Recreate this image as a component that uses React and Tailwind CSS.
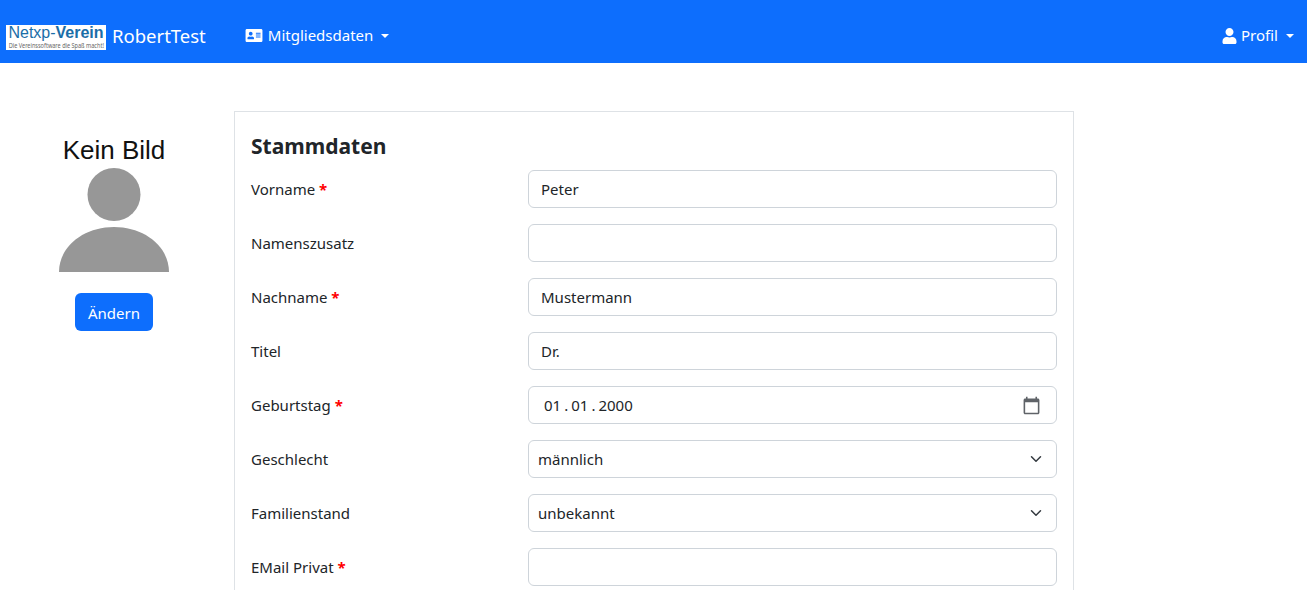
import React from 'react';
import { FaAddressCard, FaUser } from 'react-icons/fa';

const inputClass = 'w-full h-[38px] px-3 bg-white border border-[#ced4da] rounded-[6px] text-[#212529] outline-none';

function Caret() {
  return <span className="ml-2 w-0 h-0 border-x-[4.5px] border-x-transparent border-t-[4.5px] border-t-white"></span>;
}

function Row({ label, required, children }) {
  return (
    <div className="grid grid-cols-[277px_1fr] items-center mb-4">
      <label>
        {label}
        {required && <span className="text-[#ff0000] font-bold"> *</span>}
      </label>
      {children}
    </div>
  );
}

function SelectField({ value }) {
  return (
    <div className="relative">
      <select defaultValue={value} className={`${inputClass} appearance-none pl-[9px]`}>
        <option>{value}</option>
      </select>
      <svg viewBox="0 0 16 16" className="absolute right-[15px] top-[13px] w-3 h-3 pointer-events-none" fill="none">
        <path d="m2 5 6 6 6-6" stroke="#343a40" strokeWidth="2" strokeLinecap="round" strokeLinejoin="round" />
      </svg>
    </div>
  );
}

export default function App() {
  return (
    <div className="h-screen overflow-hidden bg-white text-[#212529] text-[15px] font-['Noto_Sans','Open_Sans',sans-serif]">
      <nav className="h-[63px] bg-[#0d6efd] flex items-center pt-2 pl-[6px] pr-[13px] text-white">
        <div className="w-[100px] h-[25px] mt-1 bg-white flex flex-col items-center">
          <div className="text-[16px] leading-[15px] font-['Liberation_Sans',sans-serif] text-[#1a6ea8] whitespace-nowrap">
            Netxp-<span className="font-bold">Verein</span>
          </div>
          <div className="text-[7.5px] leading-[10px] text-[#666] whitespace-nowrap scale-x-[0.74]">Die Vereinssoftware die Spaß macht!</div>
        </div>
        <span className="ml-[6px] text-[18.5px]">RobertTest</span>
        <div className="ml-[39px] flex items-center">
          <FaAddressCard className="w-[18px] h-[15px] mr-[5px]" />
          <span>Mitgliedsdaten</span>
          <Caret />
        </div>
        <div className="ml-auto flex items-center">
          <FaUser className="w-[15px] h-[16px] mr-[4px]" />
          <span>Profil</span>
          <Caret />
        </div>
      </nav>

      <main className="flex pt-12">
        <aside className="w-[228px] flex flex-col items-center pt-[24px]">
          <div className="text-[26px] leading-[30px] text-[#111] font-['Liberation_Sans',sans-serif]">Kein Bild</div>
          <svg viewBox="0 0 110 105" className="w-[110px] h-[105px] mt-[2px]" fill="#979797">
            <circle cx="55" cy="27.5" r="26.5" />
            <path d="M0 105C0 80 24 60 55 60s55 20 55 45z" />
          </svg>
          <button className="mt-[21px] h-[38px] w-[78px] pt-[2px] bg-[#0d6efd] text-white rounded-[6px]">Ändern</button>
        </aside>

        <section className="ml-[6px] w-[840px] border border-[#dee2e6] p-4 pb-0">
          <h4 className="h-[42px] text-[21px] font-bold leading-[36px]">Stammdaten</h4>
          <Row label="Vorname" required><input className={inputClass} defaultValue="Peter" /></Row>
          <Row label="Namenszusatz"><input className={inputClass} defaultValue="" /></Row>
          <Row label="Nachname" required><input className={inputClass} defaultValue="Mustermann" /></Row>
          <Row label="Titel"><input className={inputClass} defaultValue="Dr." /></Row>
          <Row label="Geburtstag" required>
            <div className={`${inputClass} flex items-center justify-between pl-[15px] pr-[15px]`}>
              <span className="flex gap-[3px]">
                <span>01</span><span>.</span><span>01</span><span>.</span><span>2000</span>
              </span>
              <svg viewBox="0 0 24 24" className="w-[19px] h-[19px]" fill="#5f6368">
                <path d="M20 3h-1V1h-2v2H7V1H5v2H4c-1.1 0-2 .9-2 2v16c0 1.1.9 2 2 2h16c1.1 0 2-.9 2-2V5c0-1.1-.9-2-2-2zm0 18H4V8h16v13z" />
              </svg>
            </div>
          </Row>
          <Row label="Geschlecht"><SelectField value="männlich" /></Row>
          <Row label="Familienstand"><SelectField value="unbekannt" /></Row>
          <Row label="EMail Privat" required><input className={inputClass} defaultValue="" /></Row>
        </section>
      </main>
    </div>
  );
}
